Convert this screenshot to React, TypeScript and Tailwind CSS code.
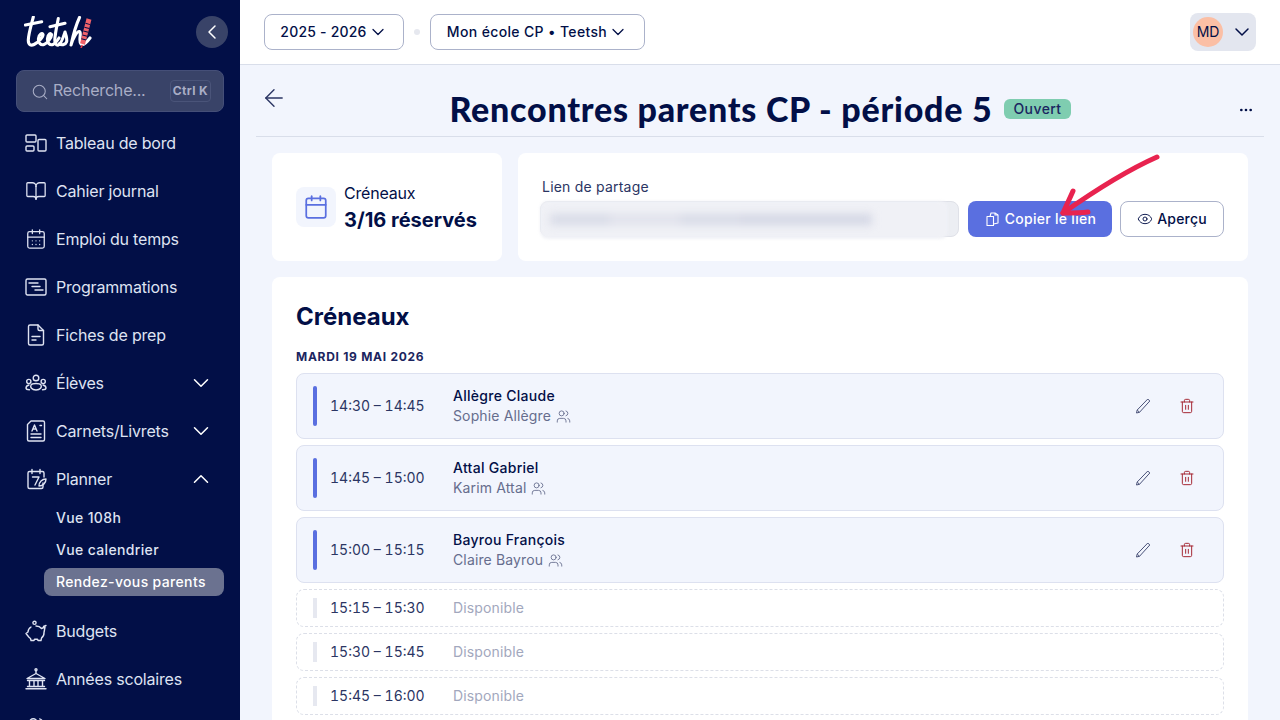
import { ChevronDown, ChevronLeft, ChevronUp, ArrowLeft, Search, Ellipsis, Eye, Trash2, Users, Calendar, BookOpen, CalendarDays } from "lucide-react"

function Logo() {
  return (
    <svg width="70" height="32" viewBox="0 0 70 32" fill="none" stroke="white" strokeWidth="3.100" strokeLinecap="round" strokeLinejoin="round">
      <path d="M9.300 1C7.500 8 4.500 18 4.300 24C4.200 29 7 30 10 28.500C14 26.500 19.500 21 19 18.500C18.500 16.500 15 18 14.500 22.500C14 27 17 29.500 20 28.500C23 27.500 28 21 27.500 18.500C27 16.500 24 18 23.500 22.500C23 27 26 29.500 29 28.500C31 27.800 33 25 35 22" />
      <path d="M1.500 9L17.700 5.700M26 10.700L41 7.300" />
      <path d="M34.300 2.500C33 9 31 18 30.800 24C30.700 27 32 29.500 34.500 29C37 28.500 39 22 41 16C42 19 43.500 23 42.500 26C41.500 29 37 29.500 35.500 27.500" />
      <path d="M55.500 1.500C52 9 49 20 47 29C49 22 53 15 55.500 15.500C58 16 54 25 57 28C59 29.500 63 26 66 22" />
      <path d="M65 3L58.500 28" stroke="#f0626a" strokeWidth="5" strokeLinecap="butt" />
      <path d="M64 7.500L59.500 24.500" stroke="#020f47" strokeWidth="5" strokeLinecap="butt" strokeDasharray="1 3" />
      <path d="M58 29.500L56.800 33" stroke="#e23a4a" strokeWidth="1.600" />
    </svg>
  )
}

function Copy() {
  return (
    <svg width="16" height="16" viewBox="0 0 16 16" fill="none" stroke="currentColor" strokeWidth="1.100" strokeLinejoin="round">
      <path d="M3 5.500h6.500v9H3z" />
      <path d="M6 5.500L7 2h4l3 2v8l-4.500 1" />
      <path d="M11 2v2h3" />
    </svg>
  )
}

function PencilIcon() {
  return (
    <svg width="18" height="18" viewBox="0 0 18 18" fill="none" stroke="#4a5279" strokeWidth="1" strokeLinejoin="round">
      <path d="M2.500 16l.7-3L13.800 2l2 2L5.500 15.300z" />
      <path d="M3.200 13l2.300 2.300" />
    </svg>
  )
}

function ProgramIcon() {
  return (
    <svg width="22" height="22" viewBox="0 0 22 22" fill="none" stroke="currentColor" strokeWidth="1.400" strokeLinecap="round" strokeLinejoin="round">
      <rect x="1" y="3" width="20" height="16" rx="1.500" />
      <path d="M4 7h9M7 10.500h8M10 14h8" />
    </svg>
  )
}

function FicheIcon() {
  return (
    <svg width="22" height="22" viewBox="0 0 22 22" fill="none" stroke="currentColor" strokeWidth="1.400" strokeLinecap="round" strokeLinejoin="round">
      <path d="M13 1H5a1.500 1.500 0 0 0-1.500 1.500v17A1.500 1.500 0 0 0 5 21h12a1.500 1.500 0 0 0 1.500-1.500V6.500z" />
      <path d="M13 1v4a1.500 1.500 0 0 0 1.500 1.500h4M7 12.500h8M7 16h4" />
    </svg>
  )
}

function GroupIcon() {
  return (
    <svg width="22" height="22" viewBox="0 0 22 22" fill="none" stroke="currentColor" strokeWidth="1.400" strokeLinecap="round" strokeLinejoin="round">
      <circle cx="11" cy="6" r="2.800" />
      <circle cx="3.800" cy="9.500" r="2.100" />
      <circle cx="18.200" cy="9.500" r="2.100" />
      <path d="M6 13c1-2 9-2 10 0 1 2-.5 5-5 5s-6-3-5-5z" />
      <path d="M4 13c-2 .5-3 1.800-3 3 0 1 1.500 1.800 3.500 1.800M18 13c2 .5 3 1.800 3 3 0 1-1.500 1.800-3.500 1.800" />
    </svg>
  )
}

function ReportIcon() {
  return (
    <svg width="22" height="22" viewBox="0 0 22 22" fill="none" stroke="currentColor" strokeWidth="1.400" strokeLinecap="round" strokeLinejoin="round">
      <path d="M6 1h12a1.500 1.500 0 0 1 1.500 1.500v17a1.500 1.500 0 0 1-1.500 1.500H4a1.500 1.500 0 0 1-1.500-1.500V4.500z" />
      <path d="M7 11l2.500-6 2.500 6M8 9h3M15 5.500h1.500M6 14h10M6 17.500h10" />
    </svg>
  )
}

function PlannerIcon() {
  return (
    <svg width="22" height="22" viewBox="0 0 22 22" fill="none" stroke="currentColor" strokeWidth="1.400" strokeLinecap="round" strokeLinejoin="round">
      <path d="M18 15v4a1.500 1.500 0 0 1-1.500 1.500h-12A1.500 1.500 0 0 1 3 19V5a1.500 1.500 0 0 1 1.500-1.500h13A1.500 1.500 0 0 1 19 5v4" />
      <path d="M7 1.500v4M15 1.500v4M7.500 9H14l-4 8M14 18c0-4 3-7 7-7 0 4-3 7-7 7z" />
    </svg>
  )
}

function DashIcon() {
  return (
    <svg width="22" height="22" viewBox="0 0 22 22" fill="none" stroke="currentColor" strokeWidth="1.400" strokeLinejoin="round">
      <rect x="1" y="3" width="10" height="7" rx="1" />
      <rect x="1" y="14" width="8" height="5" rx="1" />
      <rect x="13" y="7.500" width="8" height="11.500" rx="1" />
    </svg>
  )
}

function PiggyIcon() {
  return (
    <svg width="22" height="22" viewBox="0 0 22 22" fill="none" stroke="currentColor" strokeWidth="1.400" strokeLinecap="round" strokeLinejoin="round">
      <circle cx="9.500" cy="2.800" r="1.600" />
      <path d="M6 7C3.500 8.500 3 10.500 3 12L1 13.500l2.200 2.800c.7 1 1.500 1.700 2.300 2.200L6 20.500h3l.5-1.300h3L13 20.500h3l.6-2.600c1.700-1.300 2.600-3.300 2.400-5.400l1-5.500-3.500 1.500C15 6.500 13 6 11 6" />
      <path d="M18.500 6.500l2.500-1" />
    </svg>
  )
}

function BankIcon() {
  return (
    <svg width="22" height="22" viewBox="0 0 22 22" fill="none" stroke="currentColor" strokeWidth="1.400" strokeLinecap="round" strokeLinejoin="round">
      <circle cx="11" cy="1.800" r="1" />
      <path d="M11 3v2.500M11 5.500L2 10.500h18zM4.500 13v5M9 13v5M13 13v5M17.500 13v5M2.500 12.500h17M2.500 18.500h17M1 20.800h20" />
    </svg>
  )
}

function NavItem({ icon, label, chevron }: { icon: React.ReactNode; label?: string; chevron?: "up" | "down" }) {
  return (
    <div className="flex h-12 items-center pl-[25px] pr-[26px] text-[#dfe3f2]">
      <span className="flex w-[31px] shrink-0">{icon}</span>
      <span className="flex-1 text-base tracking-[-0.012em]">{label}</span>
      {chevron === "down" && <ChevronDown size={26} strokeWidth={1.4} className="text-white" />}
      {chevron === "up" && <ChevronUp size={26} strokeWidth={1.4} className="text-white" />}
    </div>
  )
}

function Sidebar() {
  return (
    <aside className="flex h-screen w-60 shrink-0 flex-col overflow-hidden bg-[#020f47]">
      <div className="flex h-[70px] shrink-0 items-start justify-between pl-6 pr-3 pt-4">
        <Logo />
        <button className="flex size-8 items-center justify-center rounded-full bg-[#394368] text-white">
          <ChevronLeft size={24} strokeWidth={1.5} />
        </button>
      </div>
      <div className="mx-4 flex h-[42px] shrink-0 items-center rounded-lg border border-[#454f78] bg-[#394368] pl-[14px] pr-3 text-[#a9aec6]">
        <Search size={18} strokeWidth={1.4} className="mr-1 mt-[2px]" />
        <span className="-mt-[2px] flex-1 text-base tracking-[-0.012em]">Recherche...</span>
        <span className="flex h-[22px] items-center rounded border border-[#4a5479] px-[2px] text-xs font-bold tracking-[0.03em]">Ctrl K</span>
      </div>
      <nav className="mt-[7px] flex shrink-0 flex-col">
        <NavItem icon={<DashIcon />} label="Tableau de bord" />
        <NavItem icon={<BookOpen size={22} strokeWidth={1.4} />} label="Cahier journal" />
        <NavItem icon={<CalendarDays size={22} strokeWidth={1.4} />} label="Emploi du temps" />
        <NavItem icon={<ProgramIcon />} label="Programmations" />
        <NavItem icon={<FicheIcon />} label="Fiches de prep" />
        <NavItem icon={<GroupIcon />} label="Élèves" chevron="down" />
        <NavItem icon={<ReportIcon />} label="Carnets/Livrets" chevron="down" />
        <NavItem icon={<PlannerIcon />} label="Planner" chevron="up" />
        <div className="ml-11 mr-4 flex flex-col gap-1 pt-[1px] text-sm font-medium tracking-[0.025em] text-[#dfe3f2]">
          <div className="flex h-7 items-center px-3">Vue 108h</div>
          <div className="flex h-7 items-center px-3">Vue calendrier</div>
          <div className="flex h-7 items-center rounded-lg bg-[#6b7290] px-3 text-white">Rendez-vous parents</div>
        </div>
        <div className="mt-[11px]">
          <NavItem icon={<PiggyIcon />} label="Budgets" />
          <NavItem icon={<BankIcon />} label="Années scolaires" />
          <NavItem icon={<Users size={22} strokeWidth={1.4} />} />
        </div>
      </nav>
    </aside>
  )
}

function Header() {
  return (
    <header className="flex h-[65px] shrink-0 items-center border-b border-[#d9deea] bg-white pl-6 pr-6">
      <button className="flex h-9 w-[140px] items-center justify-center gap-[1px] rounded-lg border border-[#abb2ca] text-sm font-medium tracking-[0.015em] text-[#020f47]">
        2025 - 2026 <ChevronDown size={20} strokeWidth={1.5} />
      </button>
      <span className="mx-[10px] size-[6px] rounded-full bg-[#e6e8ef]" />
      <button className="flex h-9 w-[215px] items-center justify-center gap-[1px] rounded-lg border border-[#abb2ca] text-sm font-medium tracking-[0.025em] text-[#020f47]">
        Mon école CP • Teetsh <ChevronDown size={20} strokeWidth={1.5} />
      </button>
      <div className="ml-auto flex h-[38px] w-[66px] items-center rounded-lg bg-[#e3e6ef] pl-[3px]">
        <span className="flex size-[30px] items-center justify-center rounded-full bg-[#fbbfa5] text-sm text-[#020f47]">MD</span>
        <ChevronDown size={24} strokeWidth={1.5} className="ml-[7px] text-[#020f47]" />
      </div>
    </header>
  )
}

function TitleRow() {
  return (
    <div className="relative mx-4 flex h-[72px] shrink-0 items-center justify-center gap-3 border-b border-[#d9deea] pt-4">
      <ArrowLeft size={28} strokeWidth={1.2} className="absolute left-1 top-[19px] text-[#2b3563]" />
      <h1 className="font-['Lato',sans-serif] text-[34px] font-black leading-none tracking-[0.75px] text-[#020f47]">Rencontres parents CP - période 5</h1>
      <span className="flex h-5 items-center rounded-md bg-[#7fcdb0] px-[9px] text-sm font-medium tracking-[0.03em] text-[#1b2560]">Ouvert</span>
      <Ellipsis size={16} strokeWidth={2} className="absolute right-[10px] top-[37px] text-[#020f47]" />
    </div>
  )
}

function ShareCards() {
  return (
    <div className="flex gap-4">
      <div className="flex h-[108px] w-[230px] items-center gap-2 rounded-lg bg-white pl-6">
        <span className="flex size-10 items-center justify-center rounded-lg bg-[#f2f5fd]">
          <Calendar size={26} strokeWidth={1.6} className="text-[#5a6fe0]" />
        </span>
        <div className="pt-px">
          <p className="text-base leading-[22px] tracking-[-0.012em] text-[#020f47]">Créneaux</p>
          <p className="mt-[2px] text-xl font-bold leading-[28px] text-[#020f47]">3/16 réservés</p>
        </div>
      </div>
      <div className="flex h-[108px] flex-1 flex-col rounded-lg bg-white pl-[22px] pr-6 pt-[24px]">
        <p className="pl-[2px] text-sm leading-5 tracking-[0.015em] text-[#2b3563]">Lien de partage</p>
        <div className="mt-[4px] flex items-start gap-2">
          <div className="relative h-[38px] w-[420px]">
            <div className="absolute inset-y-0 left-0 right-[1px] h-9 rounded-lg border border-[#dfe1e8] bg-[#eceef3]" />
            <div className="absolute inset-y-0 left-0 right-3 rounded-lg bg-[#f0f1f6] blur-[1.5px]" />
            <div className="absolute left-[10px] top-[13px] flex h-[11px] w-[322px] blur-[4px]">
              <span className="w-[60px] bg-[#d8dbe7]" />
              <span className="w-[70px] bg-[#e0e2ec]" />
              <span className="w-[60px] bg-[#d8dbe7]" />
              <span className="flex-1 bg-[#d4d7e5]" />
            </div>
          </div>
          <button className="flex h-9 w-[144px] items-center justify-center gap-[5px] rounded-lg bg-[#5a6fe0] text-sm font-medium tracking-[0.02em] text-white">
            <Copy /> Copier le lien
          </button>
          <button className="flex h-9 w-[104px] items-center justify-center gap-[4px] rounded-lg border border-[#abb2ca] bg-white text-sm font-medium tracking-[0.015em] text-[#020f47]">
            <Eye size={16} strokeWidth={1.4} /> Aperçu
          </button>
        </div>
      </div>
    </div>
  )
}

const booked = [
  { time: "14:30 – 14:45", name: "Allègre Claude", parent: "Sophie Allègre" },
  { time: "14:45 – 15:00", name: "Attal Gabriel", parent: "Karim Attal" },
  { time: "15:00 – 15:15", name: "Bayrou François", parent: "Claire Bayrou" },
]

const free = ["15:15 – 15:30", "15:30 – 15:45", "15:45 – 16:00"]

function BookedRow({ time, name, parent }: { time: string; name: string; parent: string }) {
  return (
    <div className="flex h-[66px] items-center rounded-lg border border-[#dde1f0] bg-[#f2f5fd] pl-4">
      <span className="h-10 w-1 rounded-full bg-[#5a6fe0]" />
      <span className="ml-[13px] w-[123px] text-sm tabular-nums text-[#2b3563]">{time}</span>
      <div className="flex-1">
        <p className="text-sm font-medium leading-5 tracking-[0.02em] text-[#020f47]">{name}</p>
        <p className="flex items-center gap-[5px] text-sm leading-5 tracking-[0.01em] text-[#666d8d]">
          {parent} <Users size={15} strokeWidth={1.4} />
        </p>
      </div>
      <PencilIcon />
      <Trash2 size={16} strokeWidth={1.5} className="ml-[27px] mr-7 text-[#a52834]" />
    </div>
  )
}

function FreeRow({ time }: { time: string }) {
  return (
    <div className="flex h-[38px] shrink-0 items-center rounded-lg border border-dashed border-[#dcdfe8] pl-4">
      <span className="h-5 w-1 bg-[#e6e8f0]" />
      <span className="ml-[13px] w-[123px] text-sm tabular-nums text-[#2b3563]">{time}</span>
      <span className="text-sm tracking-[0.01em] text-[#a2a7bd]">Disponible</span>
    </div>
  )
}

function Arrow() {
  return (
    <svg className="absolute left-[1050px] top-[150px]" width="120" height="75" viewBox="0 0 120 75" fill="none" stroke="#e8234f" strokeWidth="5" strokeLinecap="round" strokeLinejoin="round">
      <path d="M107 7C80 19 50 37 13 63" />
      <path d="M23 41C20 48 16 56 13 63C22 63 31 63 38 62" />
    </svg>
  )
}

export default function App() {
  return (
    <div className="relative flex h-screen overflow-hidden bg-[#f2f5fd] font-['Inter',sans-serif]">
      <Sidebar />
      <main className="flex min-w-0 flex-1 flex-col overflow-hidden">
        <Header />
        <TitleRow />
        <div className="flex flex-col gap-4 px-8 pt-4">
          <ShareCards />
          <section className="rounded-t-lg bg-white px-6 pb-6 pt-[22px]">
            <h2 className="text-2xl font-bold leading-9 text-[#020f47]">Créneaux</h2>
            <p className="mt-[14px] text-xs font-bold leading-4 tracking-[0.06em] text-[#1b2560]">MARDI 19 MAI 2026</p>
            <div className="mt-2 flex flex-col gap-[6px]">
              {booked.map((b) => (
                <BookedRow key={b.time} {...b} />
              ))}
              {free.map((t) => (
                <FreeRow key={t} time={t} />
              ))}
            </div>
          </section>
        </div>
      </main>
      <Arrow />
    </div>
  )
}
